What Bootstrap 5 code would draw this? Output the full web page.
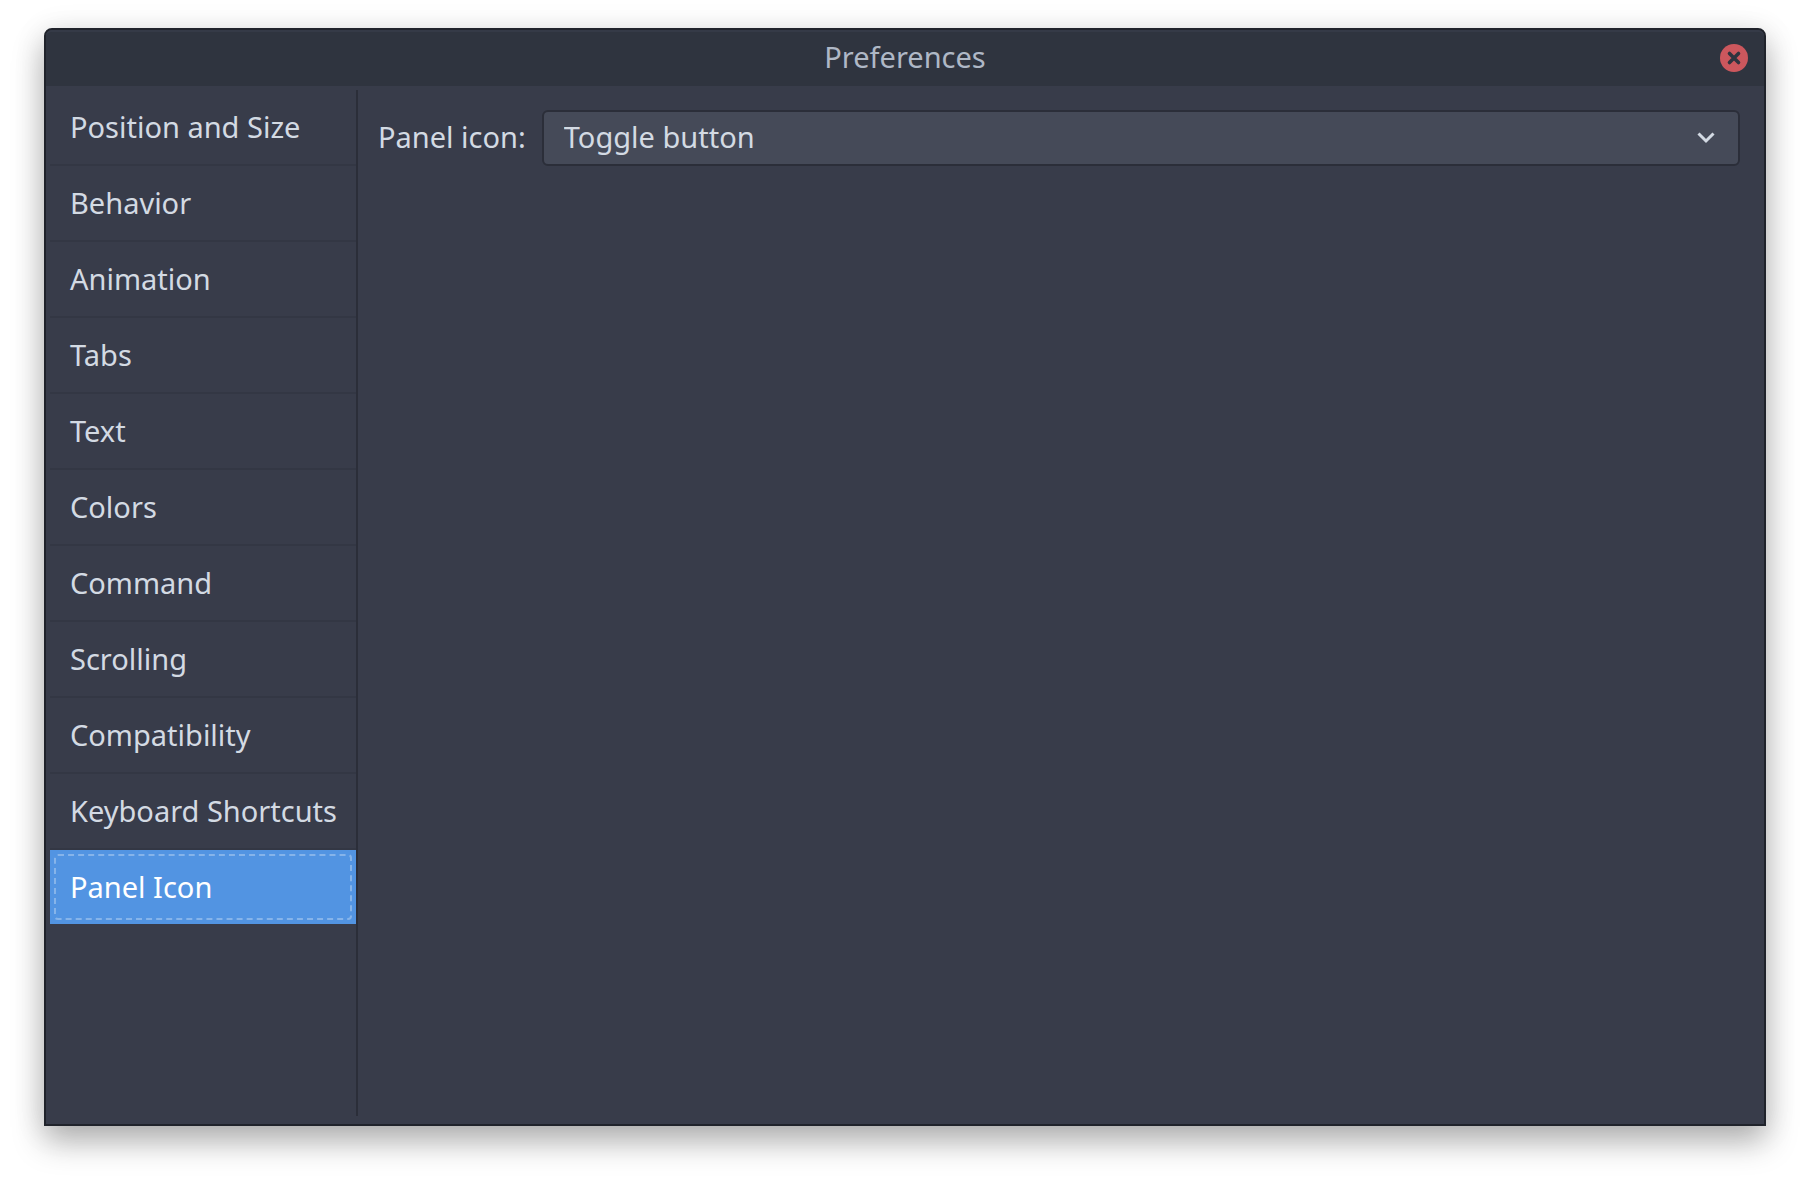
<!DOCTYPE html>
<html lang="en">
<head>
<meta charset="utf-8">
<meta name="viewport" content="width=device-width, initial-scale=1">
<title>Preferences</title>
<link href="https://cdn.jsdelivr.net/npm/bootstrap@5.3.0/dist/css/bootstrap.min.css" rel="stylesheet">
<style>
  body {
    background: #fff;
    font-family: "Noto Sans", "Open Sans", sans-serif;
    font-size: 29px;
    line-height: 38px;
    color: #d3dae3;
    padding: 28px 44px 60px;
  }
  .pref-window {
    background: #383c4a;
    border: 2px solid #20232b;
    border-radius: 8px 8px 0 0;
    box-shadow: 0 16px 32px rgba(0, 0, 0, .28), 0 4px 32px rgba(0, 0, 0, .1);
  }
  .pref-titlebar {
    height: 56px;
    background: #2f343f;
    border-top: 2px solid #353a47;
    border-radius: 6px 6px 0 0;
    color: #afb8c6;
    padding: 0 16px 2px;
    display: grid;
    grid-template-columns: 1fr auto 1fr;
    align-items: center;
  }
  .pref-titlebar h1 { grid-column: 2; font-size: 29px; line-height: 38px; font-weight: 400; padding-bottom: 2px; }
  .pref-close { justify-self: end; border: 0; padding: 0; background: none; line-height: 0; }
  .pref-body { padding: 4px 4px 8px; }
  .pref-side { border-right: 2px solid #2b2e39; width: 308px; }
  .pref-side .list-group-item {
    background: transparent;
    color: #d3dae3;
    border: 0;
    border-bottom: 2px solid #333744;
    padding: 18px 20px;
    white-space: nowrap;
  }
  .pref-side .list-group-item.active {
    background: #5294e2;
    color: #fff;
    border-bottom: 0;
    margin-top: 0;
  }
  .pref-side .list-group-item.active::after {
    content: "";
    position: absolute;
    inset: 4px;
    border: 2px dashed #86b4ea;
    border-radius: 4px;
  }
  .pref-main { padding: 20px; gap: 16px; }
  .pref-main label { padding: 8px 0 10px; }
  .pref-select {
    height: 56px;
    border: 2px solid #2b2e39;
    border-radius: 6px;
    background-color: #454a58;
    background-image: url("data:image/svg+xml,%3Csvg xmlns='http://www.w3.org/2000/svg' viewBox='0 0 18 12'%3E%3Cpath d='M1.5 1.5 9 9l7.5-7.5' fill='none' stroke='%23d3dae3' stroke-width='3'/%3E%3C/svg%3E");
    background-size: 18px 12px;
    background-position: right 23px center;
    color: #d3dae3;
    font-size: 29px;
    line-height: 38px;
    padding: 6px 60px 8px 20px;
  }
</style>
</head>
<body class="min-vh-100 d-flex flex-column">
<main class="pref-window flex-grow-1 d-flex flex-column">
  <header class="pref-titlebar">
    <h1 class="m-0">Preferences</h1>
    <button type="button" class="pref-close" aria-label="Close">
      <svg width="28" height="28" viewBox="0 0 28 28" aria-hidden="true">
        <circle cx="14" cy="14" r="14" fill="#cc575d"/>
        <path d="M9.5 9.5l9 9M18.5 9.5l-9 9" stroke="#2f343f" stroke-width="3.6" stroke-linecap="round"/>
      </svg>
    </button>
  </header>
  <div class="pref-body flex-grow-1 d-flex">
    <nav class="pref-side flex-shrink-0" aria-label="Preference pages">
      <div class="list-group list-group-flush">
        <a href="#" class="list-group-item">Position and Size</a>
        <a href="#" class="list-group-item">Behavior</a>
        <a href="#" class="list-group-item">Animation</a>
        <a href="#" class="list-group-item">Tabs</a>
        <a href="#" class="list-group-item">Text</a>
        <a href="#" class="list-group-item">Colors</a>
        <a href="#" class="list-group-item">Command</a>
        <a href="#" class="list-group-item">Scrolling</a>
        <a href="#" class="list-group-item">Compatibility</a>
        <a href="#" class="list-group-item">Keyboard Shortcuts</a>
        <a href="#" class="list-group-item active" aria-current="page">Panel Icon</a>
      </div>
    </nav>
    <section class="pref-main flex-grow-1 d-flex align-items-start">
      <label for="panel-icon" class="text-nowrap">Panel icon:</label>
      <select id="panel-icon" class="form-select pref-select">
        <option selected>Toggle button</option>
      </select>
    </section>
  </div>
</main>
<script src="https://cdn.jsdelivr.net/npm/bootstrap@5.3.0/dist/js/bootstrap.bundle.min.js"></script>
</body>
</html>
